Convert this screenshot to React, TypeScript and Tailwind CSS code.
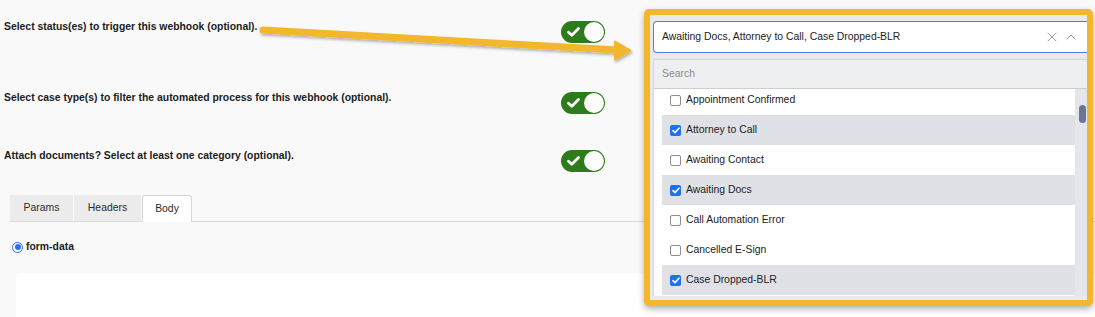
import { X, ChevronUp } from "lucide-react";

const statuses = [
  { label: "Appointment Confirmed", checked: false },
  { label: "Attorney to Call", checked: true },
  { label: "Awaiting Contact", checked: false },
  { label: "Awaiting Docs", checked: true },
  { label: "Call Automation Error", checked: false },
  { label: "Cancelled E-Sign", checked: false },
  { label: "Case Dropped-BLR", checked: true },
];

function Toggle() {
  return (
    <div className="flex h-[22px] w-[44px] items-center justify-between rounded-full bg-[#2e7b1c] pl-[6px] pr-[1px]">
      <svg width="13" height="10" viewBox="0 0 13 10" fill="none">
        <path d="M1.5 5.2 L4.8 8.2 L11.5 1.5" stroke="white" strokeWidth="2.8" strokeLinecap="round" strokeLinejoin="round" />
      </svg>
      <div className="h-[20px] w-[20px] rounded-full bg-white" />
    </div>
  );
}

function Checkbox({ checked }: { checked: boolean }) {
  if (checked) {
    return (
      <div className="flex h-[11px] w-[11px] items-center justify-center rounded-[2px] bg-[#1f6ff2]">
        <svg width="8" height="7" viewBox="0 0 8 7" fill="none">
          <path d="M1 3.6 L3 5.6 L7 1.2" stroke="white" strokeWidth="1.6" strokeLinecap="round" strokeLinejoin="round" />
        </svg>
      </div>
    );
  }
  return <div className="h-[11px] w-[11px] rounded-[2px] border border-[#8d8d8d] bg-white" />;
}

export default function App() {
  return (
    <div className="relative h-[317px] w-[1095px] overflow-hidden bg-[#f9f9f9] font-['Liberation_Sans',Arial,sans-serif] text-[#1d1d1d]">
      {/* form */}
      <div className="flex flex-col pt-[21px]">
        <div className="flex items-start">
          <p className="w-[561px] pl-[4px] text-[10.4px] font-bold leading-[12px]">
            Select status(es) to trigger this webhook (optional).
          </p>
          <Toggle />
        </div>
        <div className="mt-[49px] flex items-start">
          <p className="w-[561px] pl-[4px] text-[10.4px] font-bold leading-[12px]">
            Select case type(s) to filter the automated process for this webhook (optional).
          </p>
          <Toggle />
        </div>
        <div className="mt-[36px] flex items-start">
          <p className="w-[561px] pl-[4px] text-[10.4px] font-bold leading-[12px]">
            Attach documents? Select at least one category (optional).
          </p>
          <Toggle />
        </div>

        {/* tabs */}
        <div className="ml-[10px] mt-[23px] flex h-[27px] items-start border-b border-[#d9d9d9] text-[10.4px] text-[#2a2a2a]">
          <div className="flex h-[26px] w-[63px] items-center justify-center bg-[#ececec]">Params</div>
          <div className="ml-px flex h-[26px] w-[67px] items-center justify-center bg-[#ececec]">Headers</div>
          <div className="ml-px flex h-[27px] w-[50px] items-center justify-center rounded-t-[3px] border border-b-0 border-[#d6d6d6] bg-white">
            Body
          </div>
        </div>

        <div className="ml-[12px] mt-[19px] flex h-[12px] items-center gap-[3px]">
          <div className="flex h-[11px] w-[11px] items-center justify-center rounded-full border-[1.5px] border-[#2d6ff0] bg-white">
            <div className="h-[6px] w-[6px] rounded-full bg-[#2d6ff0]" />
          </div>
          <span className="text-[10.4px] font-bold leading-[12px]">form-data</span>
        </div>

        <div className="ml-[16px] mt-[20px] h-[60px] rounded-tl-[4px] bg-white" />
      </div>

      {/* annotation arrow */}
      <svg className="pointer-events-none absolute left-0 top-0" width="1095" height="317" viewBox="0 0 1095 317">
        <defs>
          <filter id="sh" x="-10%" y="-50%" width="120%" height="200%">
            <feDropShadow dx="1" dy="2" stdDeviation="1.5" floodColor="#000" floodOpacity="0.3" />
          </filter>
        </defs>
        <g filter="url(#sh)">
          <line x1="263" y1="30" x2="618" y2="50" stroke="#f3b72f" strokeWidth="7" strokeLinecap="round" />
          <path d="M615 41.5 L630.5 50.5 L615 59.5 Z" fill="#f3b72f" stroke="#f3b72f" strokeWidth="2" strokeLinejoin="round" />
        </g>
      </svg>

      {/* highlighted multiselect */}
      <div className="absolute left-[644px] top-[9px] h-[297px] w-[449px] overflow-hidden rounded-[5px] border-[6px] border-[#f3b72f] bg-[#e9e9eb] shadow-[0_3px_6px_rgba(0,0,0,0.3)]">
        <div className="flex w-[460px] flex-col pl-[3px] pt-[6px]">
          <div className="flex h-[32px] items-center rounded-l-[4px] border border-r-0 border-[#4d7fee] bg-white pl-[8px] text-[10.4px] text-[#222]">
            <span className="flex-1">Awaiting Docs, Attorney to Call, Case Dropped-BLR</span>
            <X size={16} strokeWidth={1.4} className="text-[#999]" />
            <ChevronUp size={16} strokeWidth={1.4} className="ml-[3px] mr-[31px] text-[#999]" />
          </div>

          <div className="mt-[6px] rounded-t-[3px] border-l border-t border-[#d6d6d8]">
            <div className="flex h-[29px] items-center border-b border-[#cdced1] bg-[#eeeff1] pl-[8px] text-[10.4px] text-[#8a8a8a]">
              Search
            </div>
            <div className="flex h-[207px] bg-white">
              <div className="w-[421px] overflow-hidden pl-[8px]">
                <div className="-mt-[4px] flex flex-col">
                  {statuses.map((s) => (
                    <div
                      key={s.label}
                      className={
                        s.checked
                          ? "flex h-[30px] items-center gap-[5px] bg-[#dfe1e6] pl-[8px] text-[10.4px] text-[#222]"
                          : "flex h-[30px] items-center gap-[5px] bg-white pl-[8px] text-[10.4px] text-[#222]"
                      }
                    >
                      <Checkbox checked={s.checked} />
                      <span>{s.label}</span>
                    </div>
                  ))}
                </div>
              </div>
              <div className="w-[12px] bg-[#e4e6eb] pl-[4px] pt-[16px]">
                <div className="h-[18px] w-[7px] rounded-[4px] bg-[#6c7598]" />
              </div>
            </div>
          </div>
        </div>
      </div>
    </div>
  );
}
